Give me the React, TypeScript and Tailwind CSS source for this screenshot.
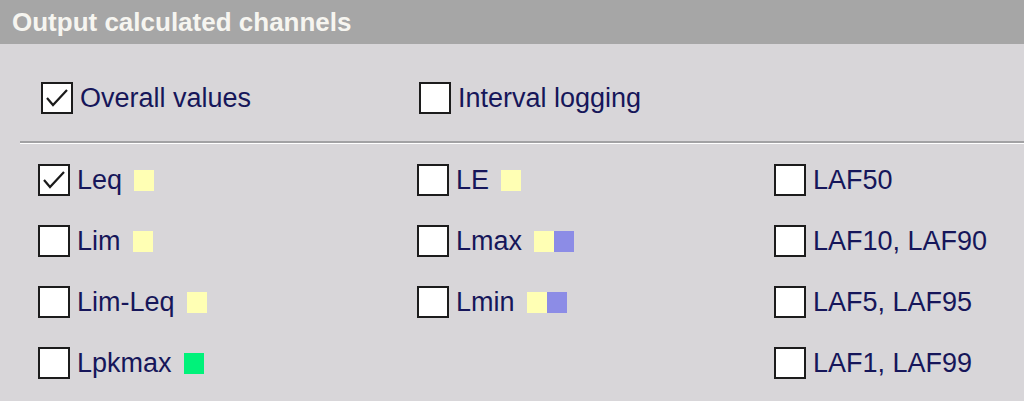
type Item = { label: string; checked?: boolean; swatches?: string[] }

const yellow = 'bg-[#ffffb4]'
const blue = 'bg-[#8c8ce6]'
const green = 'bg-[#00f27a]'

const columns: Item[][] = [
  [
    { label: 'Leq', checked: true, swatches: [yellow] },
    { label: 'Lim', swatches: [yellow] },
    { label: 'Lim-Leq', swatches: [yellow] },
    { label: 'Lpkmax', swatches: [green] },
  ],
  [
    { label: 'LE', swatches: [yellow] },
    { label: 'Lmax', swatches: [yellow, blue] },
    { label: 'Lmin', swatches: [yellow, blue] },
  ],
  [{ label: 'LAF50' }, { label: 'LAF10, LAF90' }, { label: 'LAF5, LAF95' }, { label: 'LAF1, LAF99' }],
]

function Box({ checked }: { checked?: boolean }) {
  return (
    <span className="w-[32px] h-[32px] shrink-0 bg-white border-2 border-[#1c1c1c] flex items-center justify-center">
      {checked && (
        <svg width="28" height="28" viewBox="0 0 28 28" fill="none">
          <polyline points="4,14 10,21 24,6" stroke="#1a1a1a" strokeWidth="2.2" />
        </svg>
      )}
    </span>
  )
}

function Check({ item }: { item: Item }) {
  return (
    <div className="flex items-center h-[32px]">
      <Box checked={item.checked} />
      <span className="ml-[7px] whitespace-nowrap">{item.label}</span>
      {item.swatches && (
        <span className="ml-[12px] flex">
          {item.swatches.map((s, i) => (
            <span key={i} className={`w-[20px] h-[21px] ${s}`} />
          ))}
        </span>
      )}
    </div>
  )
}

export default function App() {
  return (
    <div
      className="w-[1024px] h-[401px] overflow-hidden bg-[#d8d6d9] text-[#16165a] text-[27px]"
      style={{ fontFamily: '"Liberation Sans", Arial, sans-serif' }}
    >
      <div className="h-[44px] bg-[#a6a6a6] pl-3 flex items-center">
        <span className="text-[26px] font-bold text-[#f6f5f0] leading-none">Output calculated channels</span>
      </div>

      <div className="pt-[38px] pl-[41px] flex">
        <div className="w-[378px]">
          <Check item={{ label: 'Overall values', checked: true }} />
        </div>
        <Check item={{ label: 'Interval logging' }} />
      </div>

      <div className="mt-[27px] ml-[20px]">
        <div className="h-[2px] bg-[#a2a2a4]" />
        <div className="h-[1px] bg-white" />
      </div>

      <div className="mt-[20px] pl-[38px] grid grid-cols-[379px_357px_1fr]">
        {columns.map((col, ci) => (
          <div key={ci} className="flex flex-col gap-[29px]">
            {col.map((it) => (
              <Check key={it.label} item={it} />
            ))}
          </div>
        ))}
      </div>
    </div>
  )
}
